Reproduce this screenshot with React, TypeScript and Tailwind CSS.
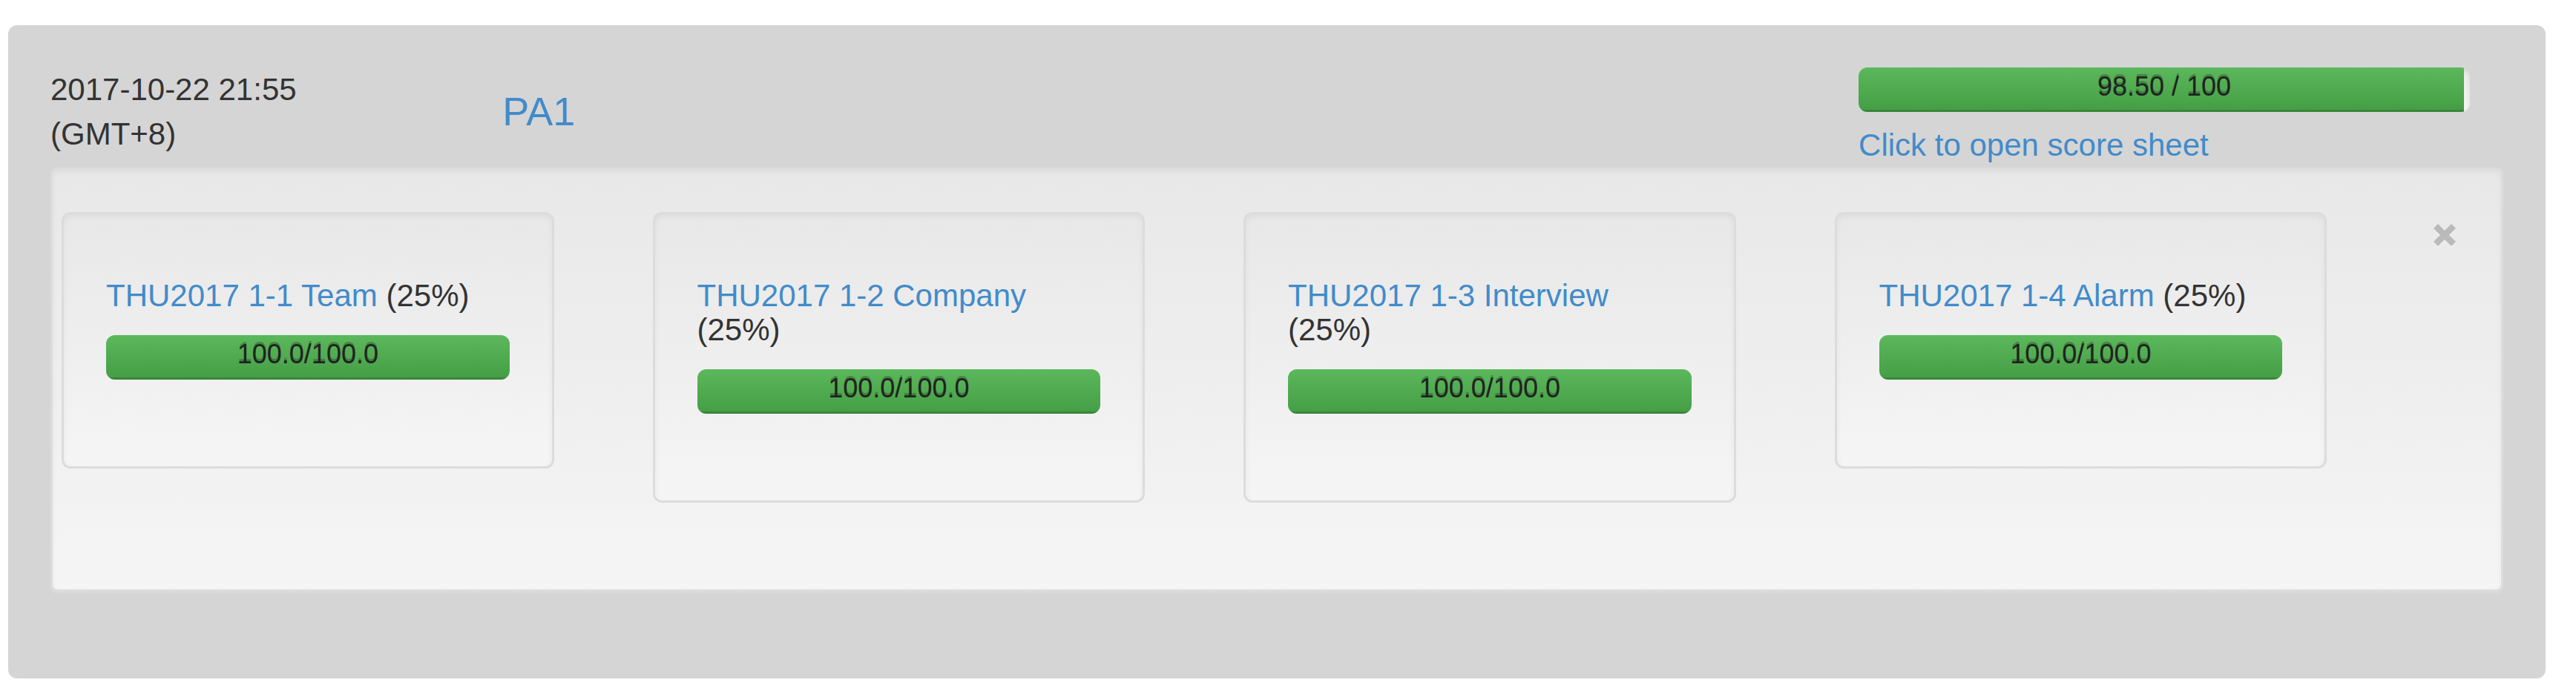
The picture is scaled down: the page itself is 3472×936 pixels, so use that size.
import type { ReactNode } from "react";

const scores = [
  { title: "THU2017 1-1 Team", weight: "(25%)", score: "100.0/100.0" },
  { title: "THU2017 1-2 Company", weight: "(25%)", score: "100.0/100.0" },
  { title: "THU2017 1-3 Interview", weight: "(25%)", score: "100.0/100.0" },
  { title: "THU2017 1-4 Alarm", weight: "(25%)", score: "100.0/100.0" },
];

function Link({ children }: { children: ReactNode }) {
  return (
    <a href="#" className="text-[#428bca] hover:underline">
      {children}
    </a>
  );
}

function Progress({ label, percent }: { label: string; percent: number }) {
  return (
    <div
      role="progressbar"
      aria-label={label}
      aria-valuenow={percent}
      className="relative h-[60px] overflow-hidden rounded-xl bg-linear-to-b from-[#ebebeb] to-[#f5f5f5] shadow-[inset_0_3px_6px_rgba(0,0,0,0.1)]"
    >
      <div
        className="h-full bg-linear-to-b from-[#5cb85c] to-[#449d44] shadow-[inset_0_-3px_0_rgba(0,0,0,0.15)]"
        style={{ width: `${percent}%` }}
      />
      <span className="absolute inset-x-0 top-0 text-center text-[36px] leading-[52px] text-[#222] [text-shadow:0_-3px_0_rgba(0,0,0,0.25)]">
        {label}
      </span>
    </div>
  );
}

export default function App() {
  return (
    <main className="pt-[34px] pr-[41px] pb-[21px] pl-[11px] font-['Liberation_Sans',Arial,sans-serif] text-[42px] leading-[60px] text-[#333]">
      <section className="rounded-xl bg-[#d5d5d5] px-[57px] pt-[57px] pb-[117px]">
        <header className="-ml-[45px] grid grid-cols-11">
          <time className="col-span-2 px-[45px]">
            2017-10-22 21:55
            <br />
            (GMT+8)
          </time>
          <h2 className="col-span-6 px-[45px] pt-[30px] text-[54px] leading-[59px]">
            <Link>PA1</Link>
          </h2>
          <div className="col-span-3 flex flex-col gap-[15px] px-[45px]">
            <Progress label="98.50 / 100" percent={99} />
            <Link>Click to open score sheet</Link>
          </div>
        </header>

        <div className="flex items-start rounded-[9px] border-[3px] border-[#dcdcdc] bg-linear-to-b from-[#e8e8e8] to-[#f5f5f5] py-[57px] pr-[57px] pl-3 shadow-[inset_0_3px_9px_rgba(0,0,0,0.05),0_3px_0_rgba(255,255,255,0.1)]">
          <div className="grid flex-1 grid-cols-4 items-start pb-[60px]">
            {scores.map((item) => (
              <article
                key={item.title}
                className="w-5/6 rounded-xl border-[3px] border-[#dcdcdc] bg-linear-to-b from-[#e8e8e8] to-[#f5f5f5] p-[57px] pb-[117px] shadow-[inset_0_3px_9px_rgba(0,0,0,0.05),0_3px_0_rgba(255,255,255,0.1)]"
              >
                <h3 className="py-[30px] leading-[46px]">
                  <Link>{item.title}</Link> {item.weight}
                </h3>
                <Progress label={item.score} percent={100} />
              </article>
            ))}
          </div>
          <button
            type="button"
            aria-label="Close"
            className="flex w-[45px] justify-end pt-4 pr-1 opacity-20"
          >
            <svg viewBox="0 0 30 33" className="w-[30px]" fill="none" strokeWidth="8.5">
              <path d="M3 6l24 24M27 6l-24 24" stroke="#fff" />
              <path d="M3 3l24 24M27 3l-24 24" stroke="#000" />
            </svg>
          </button>
        </div>
      </section>
    </main>
  );
}
